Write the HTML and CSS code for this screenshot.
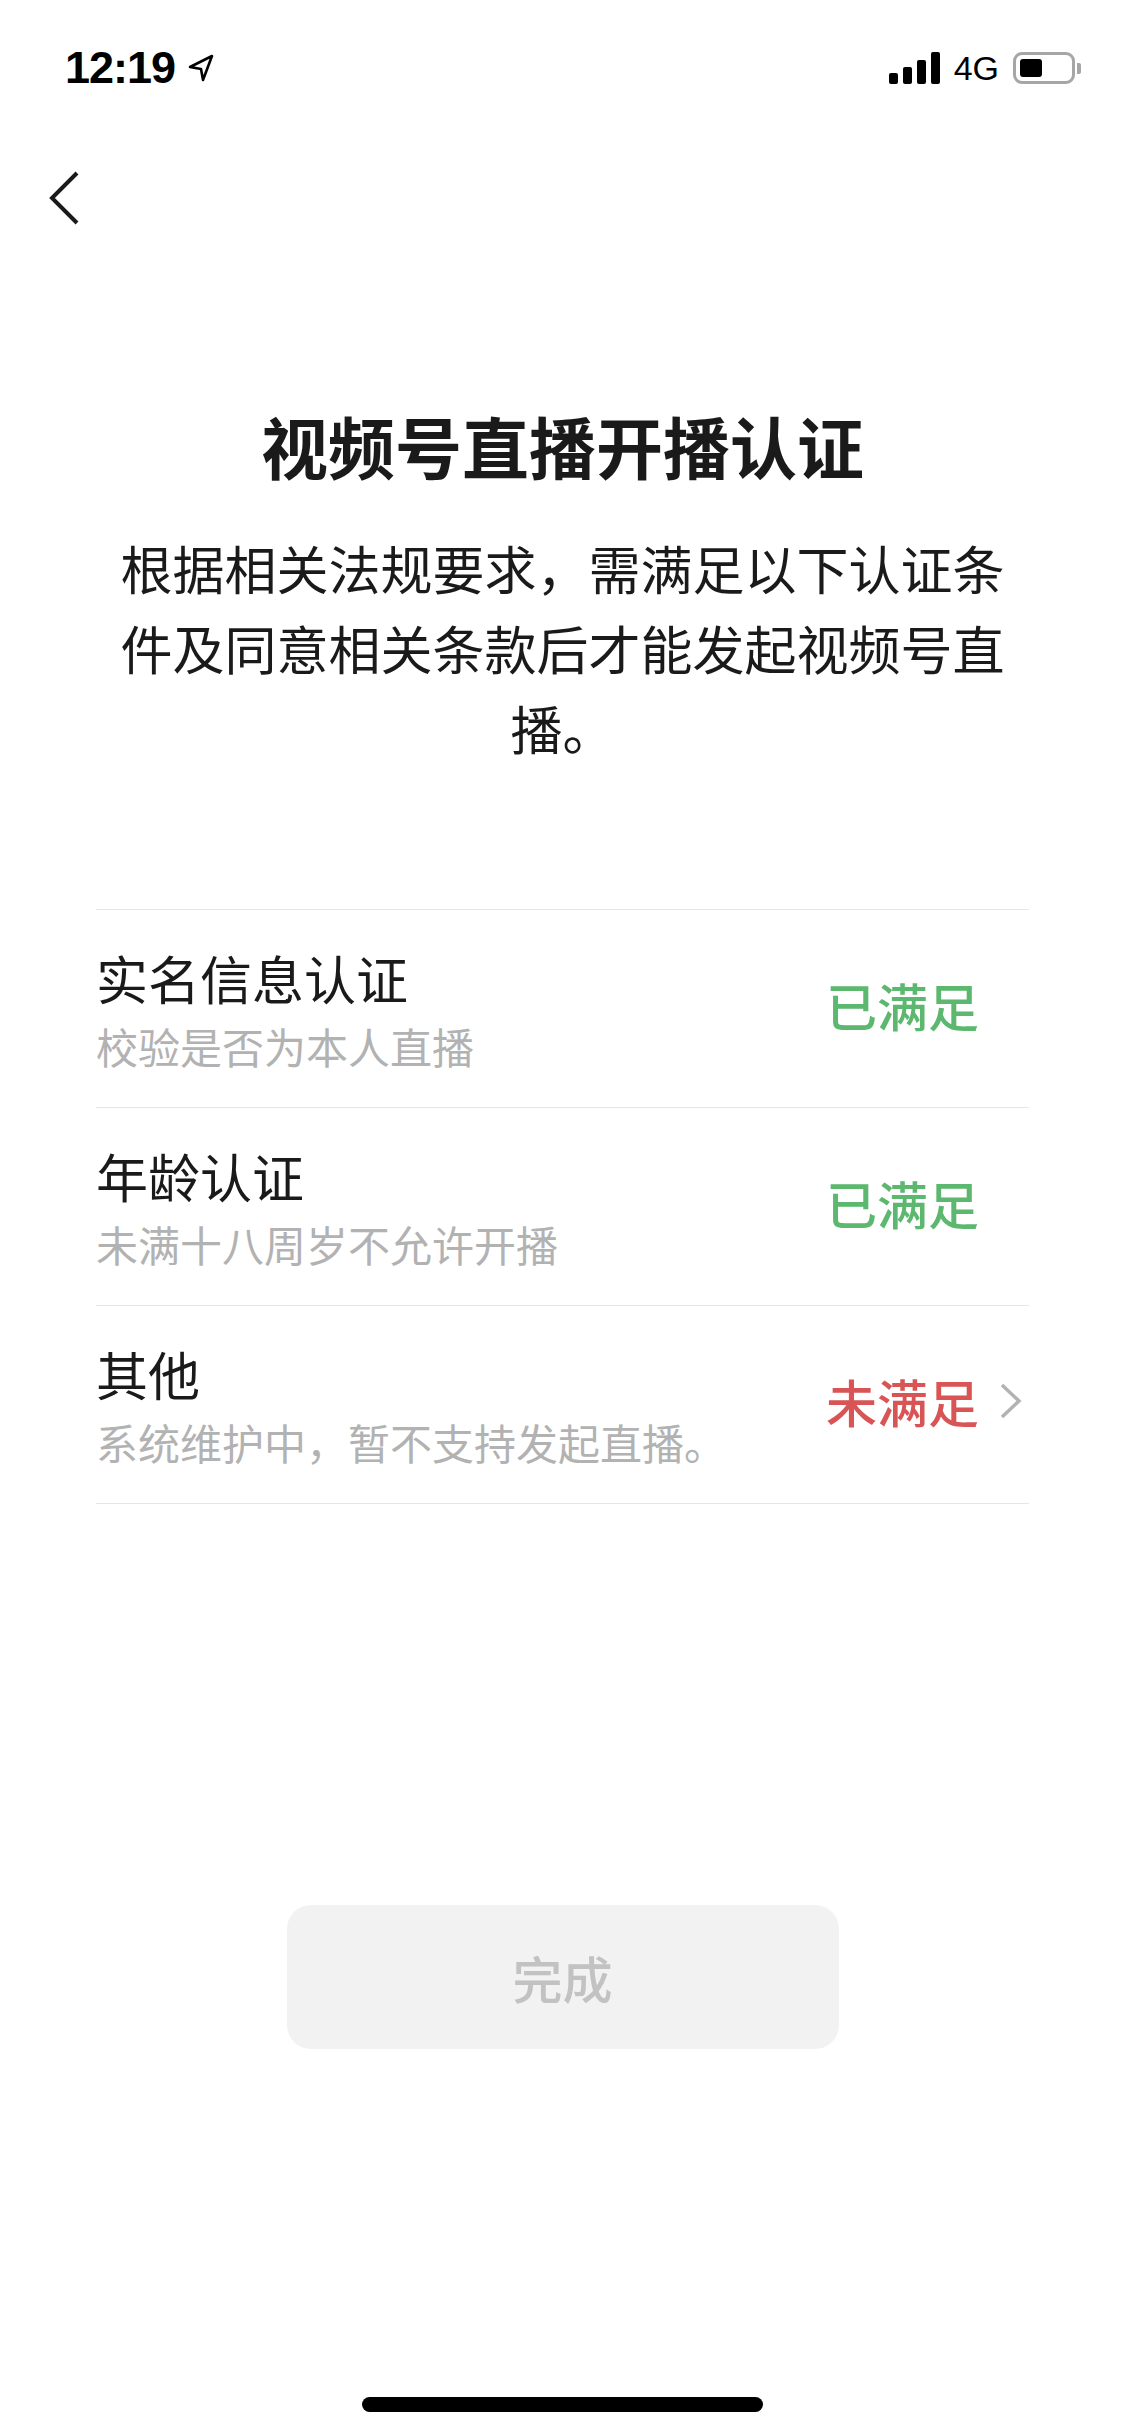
FILE: index.html
```html
<!DOCTYPE html>
<html lang="zh-CN">
<head>
<meta charset="utf-8">
<title>视频号直播开播认证</title>
<link rel="stylesheet" href="styles.css">
</head>
<body>
<div class="screen">
  <div class="statusbar">
    <div class="sb-left">
      <span class="time">12:19</span>
      <svg class="loc" viewBox="0 0 28 30" aria-hidden="true">
        <path d="M3 14 L25 3 L16 27 L14 16 Z" fill="none" stroke="#000" stroke-width="2.6" stroke-linejoin="round"/>
      </svg>
    </div>
    <div class="sb-right">
      <div class="signal"><i></i><i></i><i></i><i></i></div>
      <span class="net">4G</span>
      <div class="battery">
        <div class="batt-body"><div class="batt-fill"></div></div>
        <div class="batt-nub"></div>
      </div>
    </div>
  </div>

  <div class="navbar">
    <svg class="back" viewBox="0 0 32 56" aria-hidden="true">
      <path d="M29 3 L4 28 L29 53" fill="none" stroke="#1a1a1a" stroke-width="4"/>
    </svg>
  </div>

  <main class="content">
    <h1 class="title">视频号直播开播认证</h1>
    <p class="desc">根据相关法规要求，需满足以下认证条件及同意相关条款后才能发起视频号直播。</p>

    <ul class="checks">
      <li class="check">
        <div class="check-text">
          <div class="check-title">实名信息认证</div>
          <div class="check-sub">校验是否为本人直播</div>
        </div>
        <div class="check-status ok">
          <span>已满足</span>
          <svg class="chev hidden" viewBox="0 0 23 38" aria-hidden="true"><path d="M3 3 L20 19 L3 35" fill="none" stroke="#b2b2b2" stroke-width="3.5"/></svg>
        </div>
      </li>
      <li class="check">
        <div class="check-text">
          <div class="check-title">年龄认证</div>
          <div class="check-sub">未满十八周岁不允许开播</div>
        </div>
        <div class="check-status ok">
          <span>已满足</span>
          <svg class="chev hidden" viewBox="0 0 23 38" aria-hidden="true"><path d="M3 3 L20 19 L3 35" fill="none" stroke="#b2b2b2" stroke-width="3.5"/></svg>
        </div>
      </li>
      <li class="check">
        <div class="check-text">
          <div class="check-title">其他</div>
          <div class="check-sub">系统维护中，暂不支持发起直播。</div>
        </div>
        <div class="check-status fail">
          <span>未满足</span>
          <svg class="chev" viewBox="0 0 23 38" aria-hidden="true"><path d="M3 3 L20 19 L3 35" fill="none" stroke="#b2b2b2" stroke-width="3.5"/></svg>
        </div>
      </li>
    </ul>

    <div class="actions">
      <button class="done" type="button">完成</button>
    </div>
  </main>

  <div class="home-bar"></div>
</div>
</body>
</html>
```

FILE: styles.css
```css
html, body {
  margin: 0;
  padding: 0;
  background: #ffffff;
}

body {
  font-family: "Noto Sans CJK SC", "Noto Sans", sans-serif;
  color: #1a1a1a;
}

.screen {
  width: 1125px;
  height: 2436px;
  display: flex;
  flex-direction: column;
  overflow: hidden;
}

/* status bar */
.statusbar {
  height: 132px;
  box-sizing: border-box;
  padding: 4px 44px 0 65px;
  display: flex;
  align-items: center;
  justify-content: space-between;
}

.sb-left {
  display: flex;
  align-items: center;
  gap: 12px;
}

.time {
  font-family: "Liberation Sans", Arial, sans-serif;
  font-weight: 700;
  font-size: 45px;
  letter-spacing: -1px;
  color: #000;
}

.loc {
  width: 28px;
  height: 30px;
}

.sb-right {
  display: flex;
  align-items: center;
  gap: 14px;
}

.signal {
  display: flex;
  align-items: flex-end;
  gap: 5px;
  height: 32px;
}

.signal i {
  display: block;
  width: 9px;
  background: #000;
  border-radius: 2px;
}

.signal i:nth-child(1) { height: 11px; }
.signal i:nth-child(2) { height: 17px; }
.signal i:nth-child(3) { height: 24px; }
.signal i:nth-child(4) { height: 32px; }

.net {
  font-family: "Liberation Sans", Arial, sans-serif;
  font-size: 34px;
  color: #000;
}

.battery {
  display: flex;
  align-items: center;
  gap: 2px;
}

.batt-body {
  width: 62px;
  height: 32px;
  box-sizing: border-box;
  border: 3px solid #a6a6a6;
  border-radius: 9px;
  padding: 4px;
}

.batt-fill {
  width: 22px;
  height: 100%;
  background: #000;
  border-radius: 3px;
}

.batt-nub {
  width: 4px;
  height: 11px;
  background: #a6a6a6;
  border-radius: 0 2px 2px 0;
}

/* nav bar */
.navbar {
  height: 132px;
  display: flex;
  align-items: center;
  padding-left: 48px;
}

.back {
  width: 32px;
  height: 56px;
}

/* content */
.content {
  flex: 1;
  display: flex;
  flex-direction: column;
}

.title {
  margin: 136px 0 0;
  text-align: center;
  font-size: 67px;
  line-height: 90px;
  font-weight: 700;
  color: #1a1a1a;
}

.desc {
  width: 900px;
  margin: 38px auto 0;
  text-align: center;
  font-size: 52px;
  line-height: 80px;
  color: #1a1a1a;
}

.checks {
  list-style: none;
  margin: 141px 96px 0;
  padding: 0;
  border-top: 1px solid #e6e6e6;
}

.check {
  display: flex;
  align-items: center;
  justify-content: space-between;
  padding: 32px 7px 29px 0;
  border-bottom: 1px solid #e6e6e6;
}

.check-title {
  font-size: 52px;
  line-height: 72px;
  color: #1a1a1a;
}

.check-sub {
  font-size: 42px;
  line-height: 64px;
  color: #b2b2b2;
}

.check-status {
  display: flex;
  align-items: center;
  gap: 20px;
  margin-bottom: 10px;
  font-size: 51px;
  line-height: 72px;
  font-weight: 500;
}

.check-status.ok { color: #5cb86e; }
.check-status.fail { color: #d95555; }

.chev {
  width: 23px;
  height: 38px;
}

.chev.hidden {
  visibility: hidden;
}

.actions {
  display: flex;
  justify-content: center;
  margin-top: 401px;
}

.done {
  width: 552px;
  height: 144px;
  border: none;
  border-radius: 24px;
  background: #f2f2f2;
  color: #c2c2c2;
  font-family: inherit;
  font-size: 50px;
  font-weight: 500;
  padding: 0;
}

.home-bar {
  width: 401px;
  height: 15px;
  border-radius: 8px;
  background: #000;
  margin: 0 auto 24px;
}
```
